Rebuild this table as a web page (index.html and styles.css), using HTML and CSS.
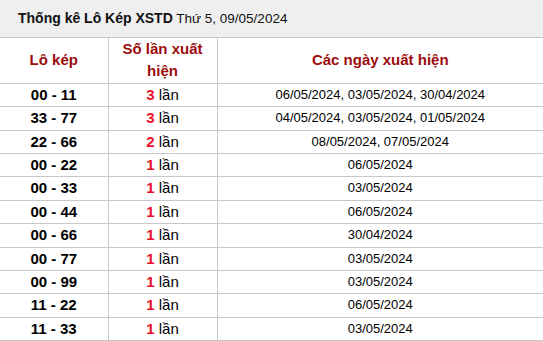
FILE: index.html
```html
<!DOCTYPE html>
<html lang="vi">
<head>
<meta charset="utf-8">
<link rel="stylesheet" href="styles.css">
</head>
<body>
<div class="box">
  <h2 class="title"><b>Thống kê Lô Kép XSTD</b> Thứ 5, 09/05/2024</h2>
  <table class="tbl">
    <colgroup><col class="c1"><col class="c2"><col class="c3"></colgroup>
    <thead>
      <tr><th>Lô kép</th><th>Số lần xuất hiện</th><th>Các ngày xuất hiện</th></tr>
    </thead>
    <tbody>
      <tr><td class="pair">00 - 11</td><td class="cnt"><span class="num">3</span> lần</td><td class="dates">06/05/2024, 03/05/2024, 30/04/2024</td></tr>
      <tr><td class="pair">33 - 77</td><td class="cnt"><span class="num">3</span> lần</td><td class="dates">04/05/2024, 03/05/2024, 01/05/2024</td></tr>
      <tr><td class="pair">22 - 66</td><td class="cnt"><span class="num">2</span> lần</td><td class="dates">08/05/2024, 07/05/2024</td></tr>
      <tr><td class="pair">00 - 22</td><td class="cnt"><span class="num">1</span> lần</td><td class="dates">06/05/2024</td></tr>
      <tr><td class="pair">00 - 33</td><td class="cnt"><span class="num">1</span> lần</td><td class="dates">03/05/2024</td></tr>
      <tr><td class="pair">00 - 44</td><td class="cnt"><span class="num">1</span> lần</td><td class="dates">06/05/2024</td></tr>
      <tr><td class="pair">00 - 66</td><td class="cnt"><span class="num">1</span> lần</td><td class="dates">30/04/2024</td></tr>
      <tr><td class="pair">00 - 77</td><td class="cnt"><span class="num">1</span> lần</td><td class="dates">03/05/2024</td></tr>
      <tr><td class="pair">00 - 99</td><td class="cnt"><span class="num">1</span> lần</td><td class="dates">03/05/2024</td></tr>
      <tr><td class="pair">11 - 22</td><td class="cnt"><span class="num">1</span> lần</td><td class="dates">06/05/2024</td></tr>
      <tr><td class="pair">11 - 33</td><td class="cnt"><span class="num">1</span> lần</td><td class="dates">03/05/2024</td></tr>
    </tbody>
  </table>
</div>
</body>
</html>
```
FILE: styles.css
```css
html, body {
  margin: 0;
  padding: 0;
  background: #fff;
}
body {
  font-family: "Liberation Sans", Arial, sans-serif;
  color: #000;
}
.box {
  width: 543px;
}
.title {
  margin: 0;
  height: 37px;
  line-height: 37px;
  padding: 0 0 0 18px;
  background: #efefef;
  border-bottom: 1px solid #c8c8c8;
  font-size: 13.5px;
  font-weight: normal;
  color: #111;
}
.title b {
  font-size: 14px;
  font-weight: bold;
}
.tbl {
  width: 543px;
  border-collapse: collapse;
  table-layout: fixed;
}
.c1 { width: 108px; }
.c2 { width: 109px; }
.tbl th, .tbl td {
  padding: 0 6px;
  text-align: center;
  border-bottom: 1px solid #c8c8c8;
  border-left: 1px solid #c8c8c8;
  line-height: 22.4px;
}
.tbl th:first-child, .tbl td:first-child {
  border-left: none;
}
.tbl th {
  font-size: 15px;
  font-weight: bold;
  color: #9b0c0c;
}
.pair {
  font-size: 15px;
  font-weight: bold;
}
.cnt {
  font-size: 15px;
}
.num {
  font-weight: bold;
  color: #e8102c;
}
.dates {
  font-size: 13px;
}
```
